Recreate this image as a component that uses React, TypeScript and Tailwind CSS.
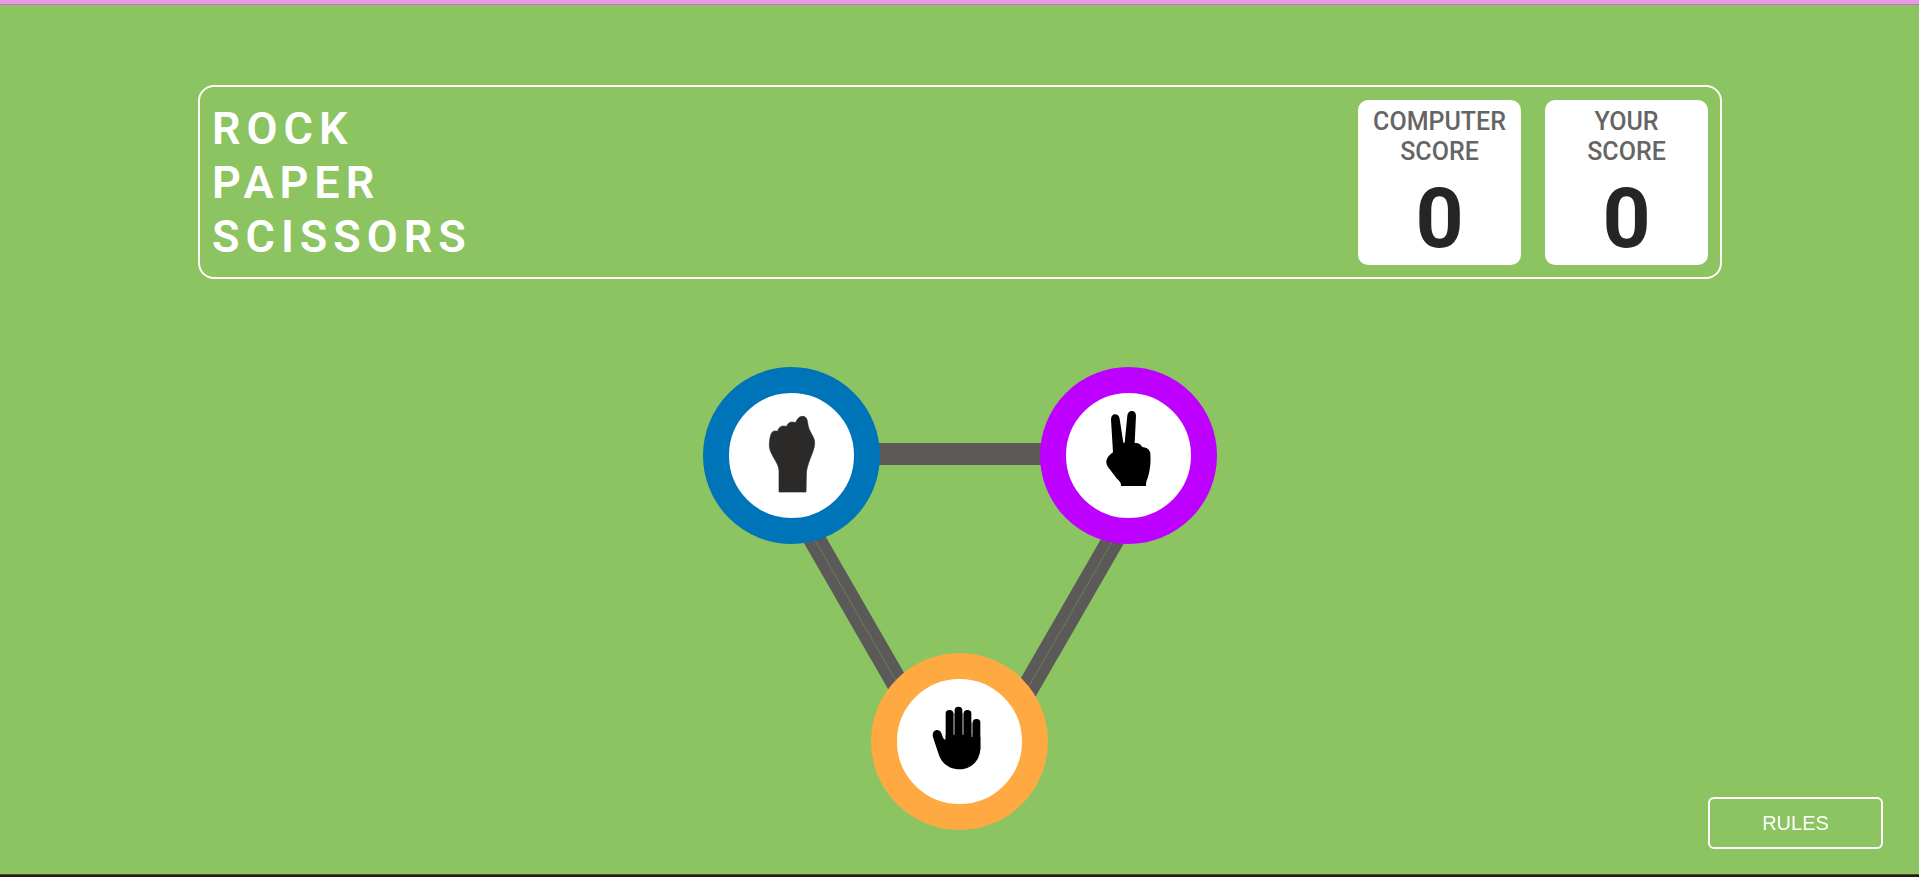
import React from "react";

function Rock() {
  return (
    <svg viewBox="117 129 375 375" className="size-full" aria-hidden="true">
      <path
        fill="#2b2a28"
        stroke="#2b2a28"
        strokeWidth="2"
        strokeLinejoin="round"
        d="M267 426V362C266 344 256 333 248 317C241 304 238 297 238 284C239 265 241 252 248 245C253 242 258 243 263 244C265 234 272 228 280 228C284 228 287 229 290 229C293 220 300 216 306 216C311 216 315 218 318 217C321 207 328 199 338 199C347 199 351 206 352 214C354 224 355 234 360 243C366 255 374 265 374 278C374 296 365 313 359 330C354 345 349 356 349 374L348 426Z"
      />
    </svg>
  );
}

function Scissors() {
  return (
    <svg viewBox="108 129 375 375" className="size-full" aria-hidden="true">
      <path
        fill="#000"
        d="M273 408C274 397 268 393 261 386L238 356C231 348 228 340 229 333C231 322 240 313 249 307L243 209C243 199 248 193 255 193C263 193 268 199 269 207L280 278H284L292 197C293 188 298 183 305 183C313 183 318 188 318 197L314 279C325 277 333 284 338 292C349 292 359 298 361 310C363 340 360 362 353 384C350 391 348 396 348 408Z"
      />
    </svg>
  );
}

function Paper() {
  return (
    <svg viewBox="114 117 375 375" className="size-full" aria-hidden="true">
      <path fill="none" stroke="#8a8a8a" strokeWidth="5" d="M285 220V286M312 220V286M339 248V292" />
      <g fill="#000">
        <rect x="260" y="210" width="23" height="110" rx="11" />
        <rect x="287" y="200" width="23" height="110" rx="11" />
        <rect x="314" y="210" width="23" height="110" rx="11" />
        <rect x="341" y="237" width="23" height="100" rx="11" />
        <path d="M260 299V284H337V291H364V324C364 360 338 388 302 388C270 388 246 369 238 340L222 292C216 270 240 262 247 279C251 288 252 299 260 299Z" />
      </g>
    </svg>
  );
}

function Choice({ label, ring, children }: { label: string; ring: string; children: React.ReactNode }) {
  return (
    <button
      type="button"
      aria-label={label}
      className={`relative size-[177px] cursor-pointer rounded-full border-[26px] bg-white ${ring}`}
    >
      {children}
    </button>
  );
}

function Connectors() {
  return (
    <svg viewBox="0 0 514 463" className="absolute inset-0 size-full" aria-hidden="true">
      <g stroke="#5c5959" strokeWidth="22">
        <path d="M150 87H364" />
        <path d="M94 142L211 345" />
        <path d="M428 142L311 345" />
      </g>
      <g stroke="#8cc462" strokeWidth="1" strokeDasharray="2 1" opacity="0.5">
        <path d="M94 142L211 345" />
        <path d="M428 142L311 345" />
      </g>
    </svg>
  );
}

function Score({ owner, value }: { owner: string; value: number }) {
  return (
    <div className="flex h-[165px] w-[163px] flex-col items-center rounded-[10px] bg-white pt-[7px] text-center">
      <h2 className="text-[25px] leading-[30px] font-medium text-[#656565]">
        {owner}
        <br />
        SCORE
      </h2>
      <p className="mt-[3px] text-[84px] leading-[98px] font-bold text-[#252525]">{value}</p>
    </div>
  );
}

export default function App() {
  return (
    <div className="flex min-h-screen flex-col border-t-4 border-b-2 border-t-[#eb98e6] border-b-[#251c10] bg-[#8cc462] font-['Roboto',sans-serif]">
      <div className="flex grow flex-col border-t border-b border-t-[#b97fb4] border-b-[#51472f]">
        <header className="mr-[197px] ml-[198px] mt-[80px] flex items-center justify-between rounded-2xl border-2 border-white px-3 pt-[13px] pb-3">
          <h1 className="text-[45px] leading-[54px] font-semibold tracking-[6px] text-white">
            ROCK
            <br />
            PAPER
            <br />
            SCISSORS
          </h1>
          <div className="flex gap-6">
            <Score owner="COMPUTER" value={0} />
            <Score owner="YOUR" value={0} />
          </div>
        </header>

        <main className="relative mx-auto mt-[88px] flex w-[514px] flex-col gap-[109px]">
          <Connectors />
          <div className="flex justify-between">
            <Choice label="Rock" ring="border-[#0074b9]">
              <Rock />
            </Choice>
            <Choice label="Scissors" ring="border-[#bd00ff]">
              <Scissors />
            </Choice>
          </div>
          <div className="flex justify-center">
            <Choice label="Paper" ring="border-[#ffa943]">
              <Paper />
            </Choice>
          </div>
        </main>
      </div>

      <button
        type="button"
        className="fixed right-9 bottom-7 h-[52px] w-[175px] cursor-pointer rounded-md border-2 border-white font-['Liberation_Sans',sans-serif] text-[20px] text-white"
      >
        RULES
      </button>
    </div>
  );
}
